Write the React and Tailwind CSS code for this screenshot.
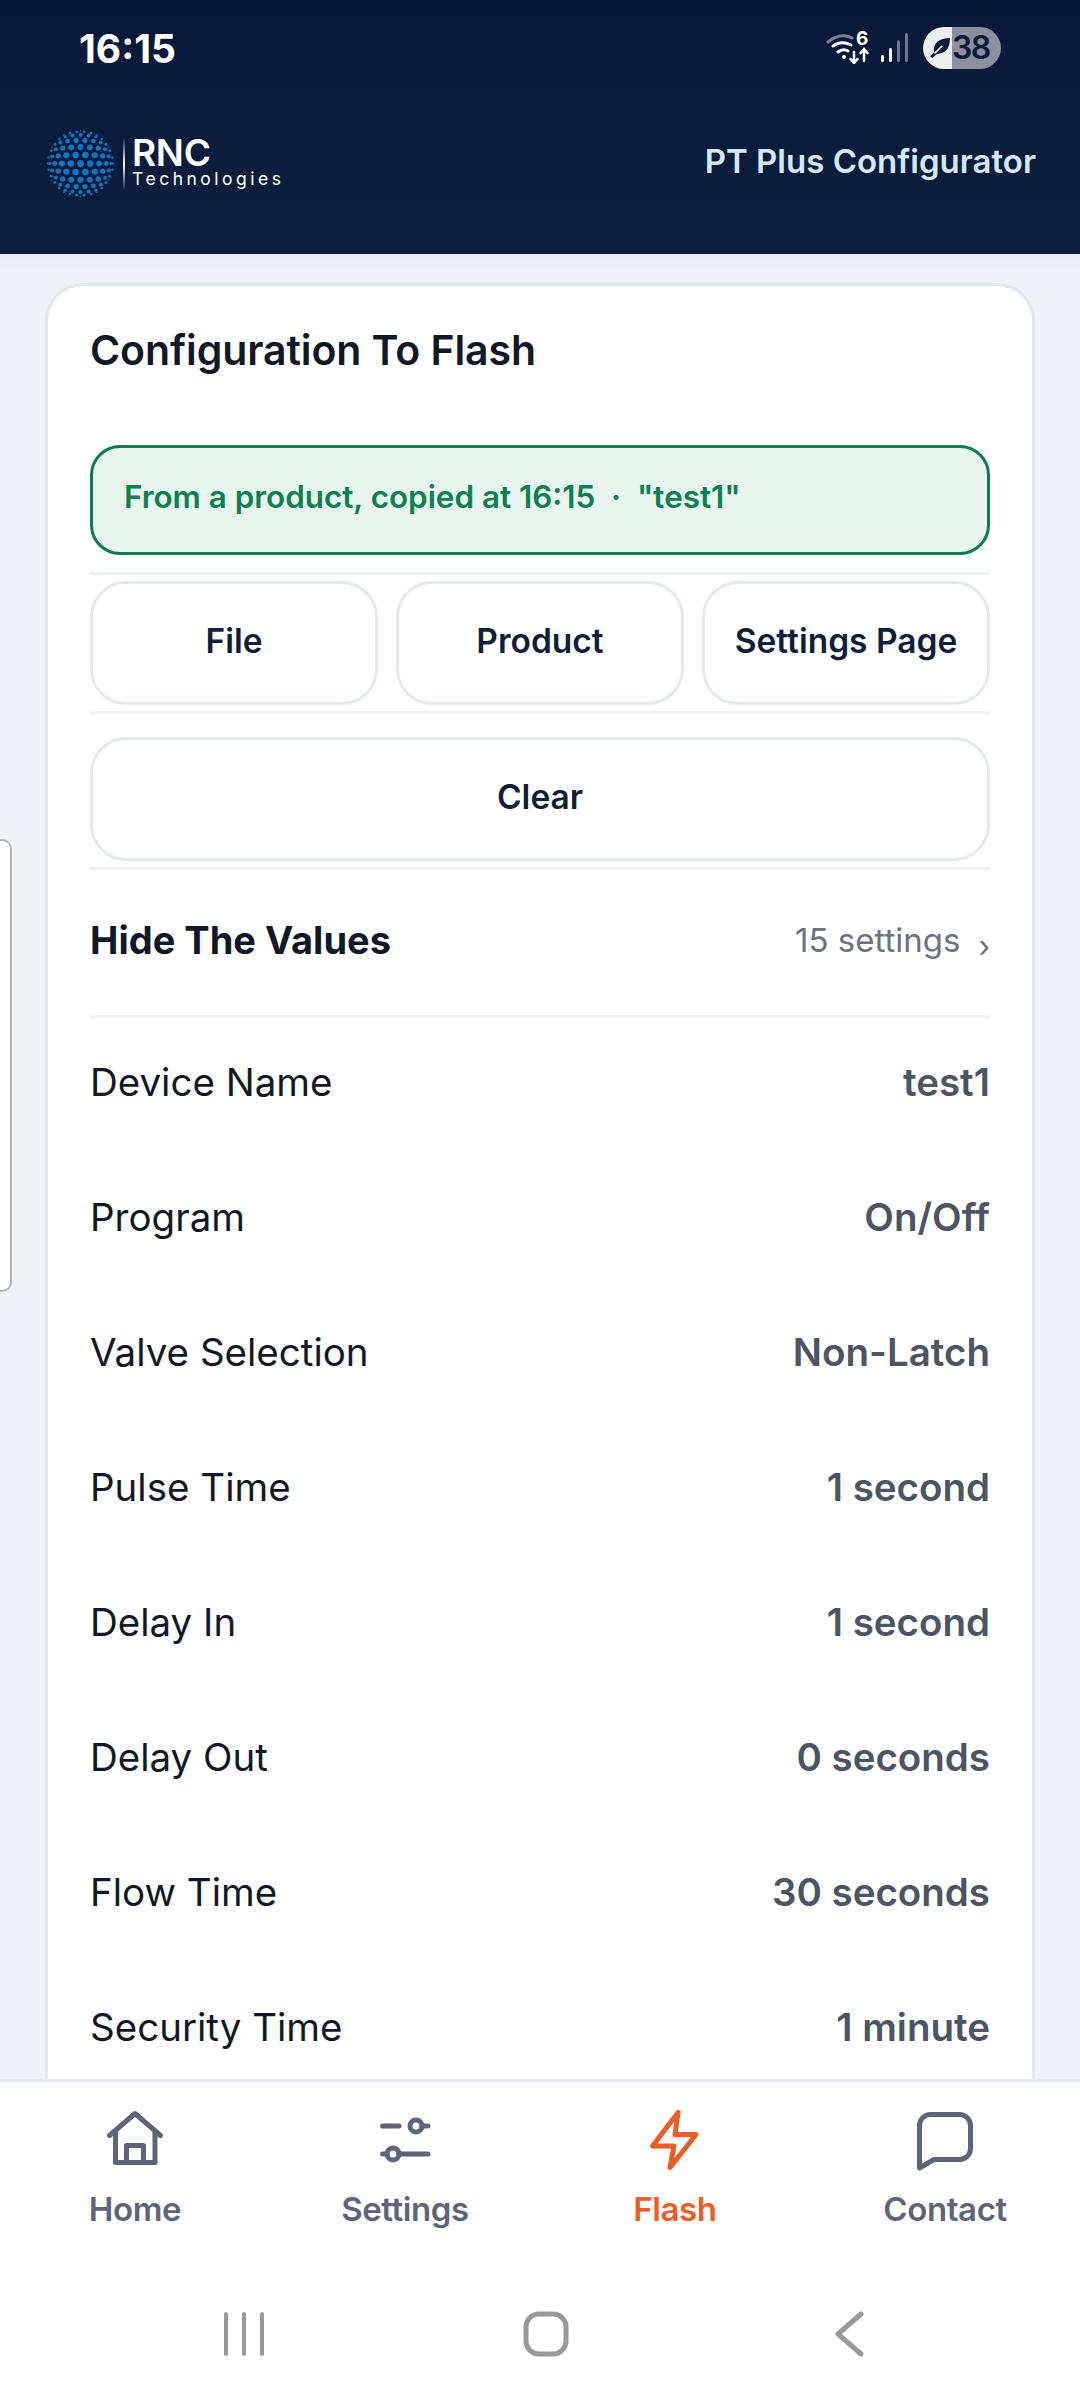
const rows = [
  ['Device Name', 'test1'],
  ['Program', 'On/Off'],
  ['Valve Selection', 'Non-Latch'],
  ['Pulse Time', '1 second'],
  ['Delay In', '1 second'],
  ['Delay Out', '0 seconds'],
  ['Flow Time', '30 seconds'],
  ['Security Time', '1 minute'],
];

function Globe() {
  const dots = [];
  const R = 33;
  const step = 0.3;
  for (let j = -7; j <= 7; j++) {
    for (let i = -8; i <= 8; i++) {
      const a = (i + (j % 2 ? 0.5 : 0)) * step;
      const b = j * step * 0.866;
      const d = Math.hypot(a, b);
      if (d > Math.PI / 2) continue;
      const rr = Math.sin(d) * R;
      const x = d === 0 ? 0 : (a / d) * rr;
      const y = d === 0 ? 0 : (b / d) * rr;
      const s = Math.cos(d);
      dots.push(<circle key={`${i}-${j}`} cx={33.5 + x} cy={33.5 + y} r={0.7 + 2.7 * s} fill="#0f76c3" />);
    }
  }
  return <svg width="67" height="67" viewBox="0 0 67 67" className="shrink-0">{dots}</svg>;
}

function StatusIcons() {
  return (
    <div className="flex items-center">
      <svg width="46" height="32" viewBox="0 0 46 32" className="mr-[9px] text-white" fill="none" stroke="currentColor" strokeLinecap="round">
        <path d="M2 10 Q14 0 26 6" strokeWidth="3" stroke="#7d8496" />
        <path d="M7 14 Q15 8 25 13" strokeWidth="3" />
        <path d="M12 20 Q17 16 22 19" strokeWidth="3" />
        <circle cx="18" cy="25" r="2" fill="currentColor" stroke="none" />
        <path d="M28 20 V31 M24.5 27 L28 31 L31.5 27" strokeWidth="2.5" />
        <path d="M38 29 V17 M34.5 21 L38 17 L41.5 21" strokeWidth="2.5" />
      </svg>
      <span className="absolute left-[856px] top-[27px] text-[19px] font-bold leading-[24px] text-white">6</span>
      <svg width="28" height="30" viewBox="0 0 28 30" className="mr-[14px]">
        <rect x="0" y="22" width="3" height="7" rx="1.5" fill="#fff" />
        <rect x="8" y="15" width="3" height="14" rx="1.5" fill="#fff" />
        <rect x="16" y="7" width="3" height="22" rx="1.5" fill="#6f7789" />
        <rect x="24" y="0" width="3" height="29" rx="1.5" fill="#6f7789" />
      </svg>
      <div className="flex h-[42px] w-[78px] overflow-hidden rounded-full">
        <div className="flex w-[29px] items-center justify-end bg-[#eceef1] pr-[1px]">
          <svg width="22" height="22" viewBox="0 0 20 20">
            <path d="M19 1 C19 11 15 15 7 15.5 L3 19 L1 17.5 L4.5 14 C3.5 6 9 1 19 1 Z" fill="#0c1b38" />
            <path d="M5 15 L12 8" stroke="#eceef1" strokeWidth="1.5" />
          </svg>
        </div>
        <div className="flex flex-1 items-center bg-[#8b90a0]">
          <span className="text-[32px] font-semibold leading-none tracking-[-1.5px] text-[#0c1b38]">38</span>
        </div>
      </div>
    </div>
  );
}

function Home() {
  return (
    <svg width="60" height="60" viewBox="0 0 60 60" fill="none" stroke="currentColor" strokeWidth="5" strokeLinecap="round" strokeLinejoin="round">
      <path d="M4.5 26.5 L30 4.5 L55.5 26.5" />
      <path d="M10.5 24 V53.5 H50 V24" />
      <path d="M21.5 53.5 V36.5 H38.5 V53.5" />
    </svg>
  );
}
function Sliders() {
  return (
    <svg width="60" height="60" viewBox="0 0 60 60" fill="none" stroke="currentColor" strokeWidth="5" strokeLinecap="round">
      <path d="M7.5 17 H24" />
      <circle cx="41" cy="17" r="6" />
      <path d="M47 17 H53" />
      <path d="M7.5 45 H12" />
      <circle cx="18" cy="45" r="6" />
      <path d="M24 45 H53" />
    </svg>
  );
}
function Bolt() {
  return (
    <svg width="60" height="64" viewBox="0 0 60 64" fill="none" stroke="currentColor" strokeWidth="5" strokeLinejoin="round">
      <path d="M33 3.5 L7.5 37 H29 L25 58.5 L51 25.5 H30 Z" />
    </svg>
  );
}
function Bubble() {
  return (
    <svg width="60" height="64" viewBox="0 0 60 64" fill="none" stroke="currentColor" strokeWidth="5" strokeLinejoin="round">
      <path d="M4.5 59 V16.5 A11 11 0 0 1 15.5 5.5 H44.5 A11 11 0 0 1 55.5 16.5 V39.5 A11 11 0 0 1 44.5 50.5 H19 Z" />
    </svg>
  );
}

function NavItem({ icon, label, active }) {
  return (
    <div className={`flex flex-col items-center ${active ? 'text-[#ea5f27]' : 'text-[#5f6579]'}`}>
      <div className="flex h-[64px] items-start">{icon}</div>
      <span className="mt-[16px] text-[33px] font-semibold leading-[40px] tracking-[-0.4px]">{label}</span>
    </div>
  );
}

function Btn({ children, h = 'h-[124px]' }) {
  return (
    <div className={`flex ${h} items-center justify-center rounded-[36px] border-[3px] border-[#e5e9f0] pb-[4px] text-[33.5px] font-semibold text-[#0f1f3a]`}>
      {children}
    </div>
  );
}

export default function App() {
  return (
    <div className="relative flex h-[2400px] w-[1080px] flex-col overflow-hidden bg-white font-['Inter',sans-serif]">
      <header className="h-[254px] shrink-0 bg-gradient-to-b from-[#08183a] to-[#0d1f3d] px-[44px]">
        <div className="flex h-[92px] items-center justify-between pl-[35px] pr-[35px] pt-[4px]">
          <span className="text-[39px] font-bold leading-none text-white">16:15</span>
          <StatusIcons />
        </div>
        <div className="flex h-[162px] items-start justify-between">
          <div className="flex items-center pl-[3px] pt-[38px]">
            <Globe />
            <div className="ml-[9px] h-[54px] w-[2px] bg-gradient-to-b from-transparent via-white to-transparent" />
            <div className="ml-[7px] flex flex-col">
              <span className="text-[37px] font-semibold leading-[31px] tracking-[-0.3px] text-white">RNC</span>
              <span className="text-[17.5px] leading-[22px] tracking-[3.5px] text-white">Technologies</span>
            </div>
          </div>
          <span className="pt-[44px] text-[33px] font-semibold leading-[50px] text-[#d3e8f9]">PT Plus Configurator</span>
        </div>
      </header>

      <main className="min-h-0 flex-1 overflow-hidden bg-[#eef1f6] bg-gradient-to-b from-[#e6e9ee] to-[#eef1f6] to-[16px] px-[45px] pt-[29px]">
        <div className="h-full rounded-t-[38px] border-[3px] border-b-0 border-[#e2e6ed] bg-white px-[42px]">
          <h1 className="pt-[39px] text-[41px] font-semibold leading-[50px] tracking-[-0.1px] text-[#111827]">Configuration To Flash</h1>
          <div className="mt-[70px] flex h-[110px] items-center rounded-[30px] border-[3px] border-[#0e7c50] bg-[#e8f5ee] pb-[4px] pl-[31px] text-[31.4px] font-semibold text-[#0f7f50]">
            From a product, copied at 16:15 &nbsp;·&nbsp; "test1"
          </div>
          <div className="mt-[17px] border-y-[3px] border-[#eef1f6] py-[6px]">
            <div className="grid grid-cols-3 gap-[18px]">
              <Btn>File</Btn>
              <Btn>Product</Btn>
              <Btn>Settings Page</Btn>
            </div>
          </div>
          <div className="mt-[23px]">
            <Btn>Clear</Btn>
          </div>
          <div className="mt-[6px] flex h-[151px] items-center justify-between border-y-[3px] border-[#eef1f6] pb-[4px]">
            <span className="text-[38px] font-bold text-[#111827]">Hide The Values</span>
            <div className="flex items-center text-[#6b7280]">
              <span className="text-[33px]">15 settings</span>
              <span className="ml-[18px] mt-[10px] text-[30px] leading-none">›</span>
            </div>
          </div>
          <div>
            {rows.map(([k, v], i) => (
              <div key={k} className={`flex h-[135px] items-center justify-between text-[38.5px] ${i === 0 ? 'mt-[-3px]' : ''}`}>
                <span className="text-[#111827]">{k}</span>
                <span className="font-semibold text-[#4b5563]">{v}</span>
              </div>
            ))}
          </div>
        </div>
      </main>

      <div className="absolute left-0 top-[839px] h-[453px] w-[12px] rounded-r-[10px] border-y-[2px] border-r-[2px] border-[#b3b3b3] bg-white" />

      <footer className="relative h-[321px] shrink-0 border-t-[3px] border-[#e5e9f0] bg-white">
        <nav className="grid grid-cols-4 pt-[27px]">
          <NavItem icon={<Home />} label="Home" />
          <NavItem icon={<Sliders />} label="Settings" />
          <NavItem icon={<Bolt />} label="Flash" active />
          <NavItem icon={<Bubble />} label="Contact" />
        </nav>
        <div className="mt-[82px] flex items-center pl-[221px]">
          <svg width="46" height="46" viewBox="0 0 46 46" stroke="#999" strokeWidth="4" strokeLinecap="round">
            <path d="M5 3 V43 M23 3 V43 M41 3 V43" />
          </svg>
          <svg width="46" height="46" viewBox="0 0 46 46" fill="none" stroke="#999" strokeWidth="5" className="ml-[256px]">
            <rect x="3" y="3" width="40" height="40" rx="13" />
          </svg>
          <svg width="32" height="46" viewBox="0 0 32 46" fill="none" stroke="#999" strokeWidth="5" strokeLinecap="round" strokeLinejoin="round" className="ml-[265px]">
            <path d="M27 3 L4 23 L27 43" />
          </svg>
        </div>
      </footer>
    </div>
  );
}
